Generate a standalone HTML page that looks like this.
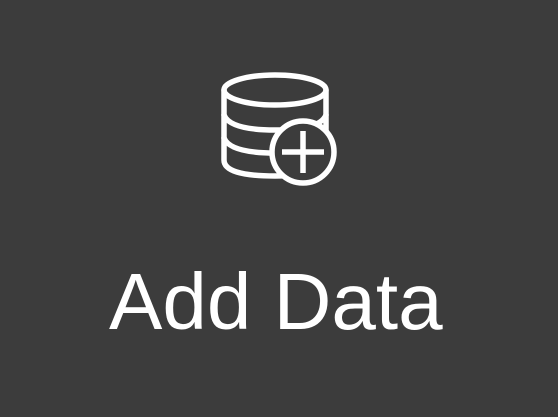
<!DOCTYPE html>
<html><head><meta charset="utf-8"><style>
html,body{margin:0;padding:0;width:558px;height:417px;background:#3c3c3c;overflow:hidden}
.t{position:absolute;left:109px;top:262px;font-family:"Liberation Sans",sans-serif;font-size:80px;color:#fff;line-height:1;white-space:nowrap;letter-spacing:0px}
svg{position:absolute;left:0;top:0}
</style></head><body>
<svg width="558" height="417" viewBox="0 0 558 417">
<g fill="none" stroke="#fff" stroke-width="5.5" stroke-linecap="round">
<ellipse cx="275" cy="90" rx="51" ry="15"/>
<path d="M224 90 V160 Q224 176 275 176 Q326 176 326 160 V90"/>
<path d="M224 115 Q230 130 275 130 Q320 130 326 115"/>
<path d="M224 138 Q230 153 275 153 Q320 153 326 138"/>
</g>
<circle cx="303" cy="152" r="31" fill="#3c3c3c" stroke="#fff" stroke-width="5.5"/>
<path d="M303 131 V173 M282 152 H324" stroke="#fff" stroke-width="5.5"/>
</svg>
<div class="t">Add Data</div>
</body></html>
